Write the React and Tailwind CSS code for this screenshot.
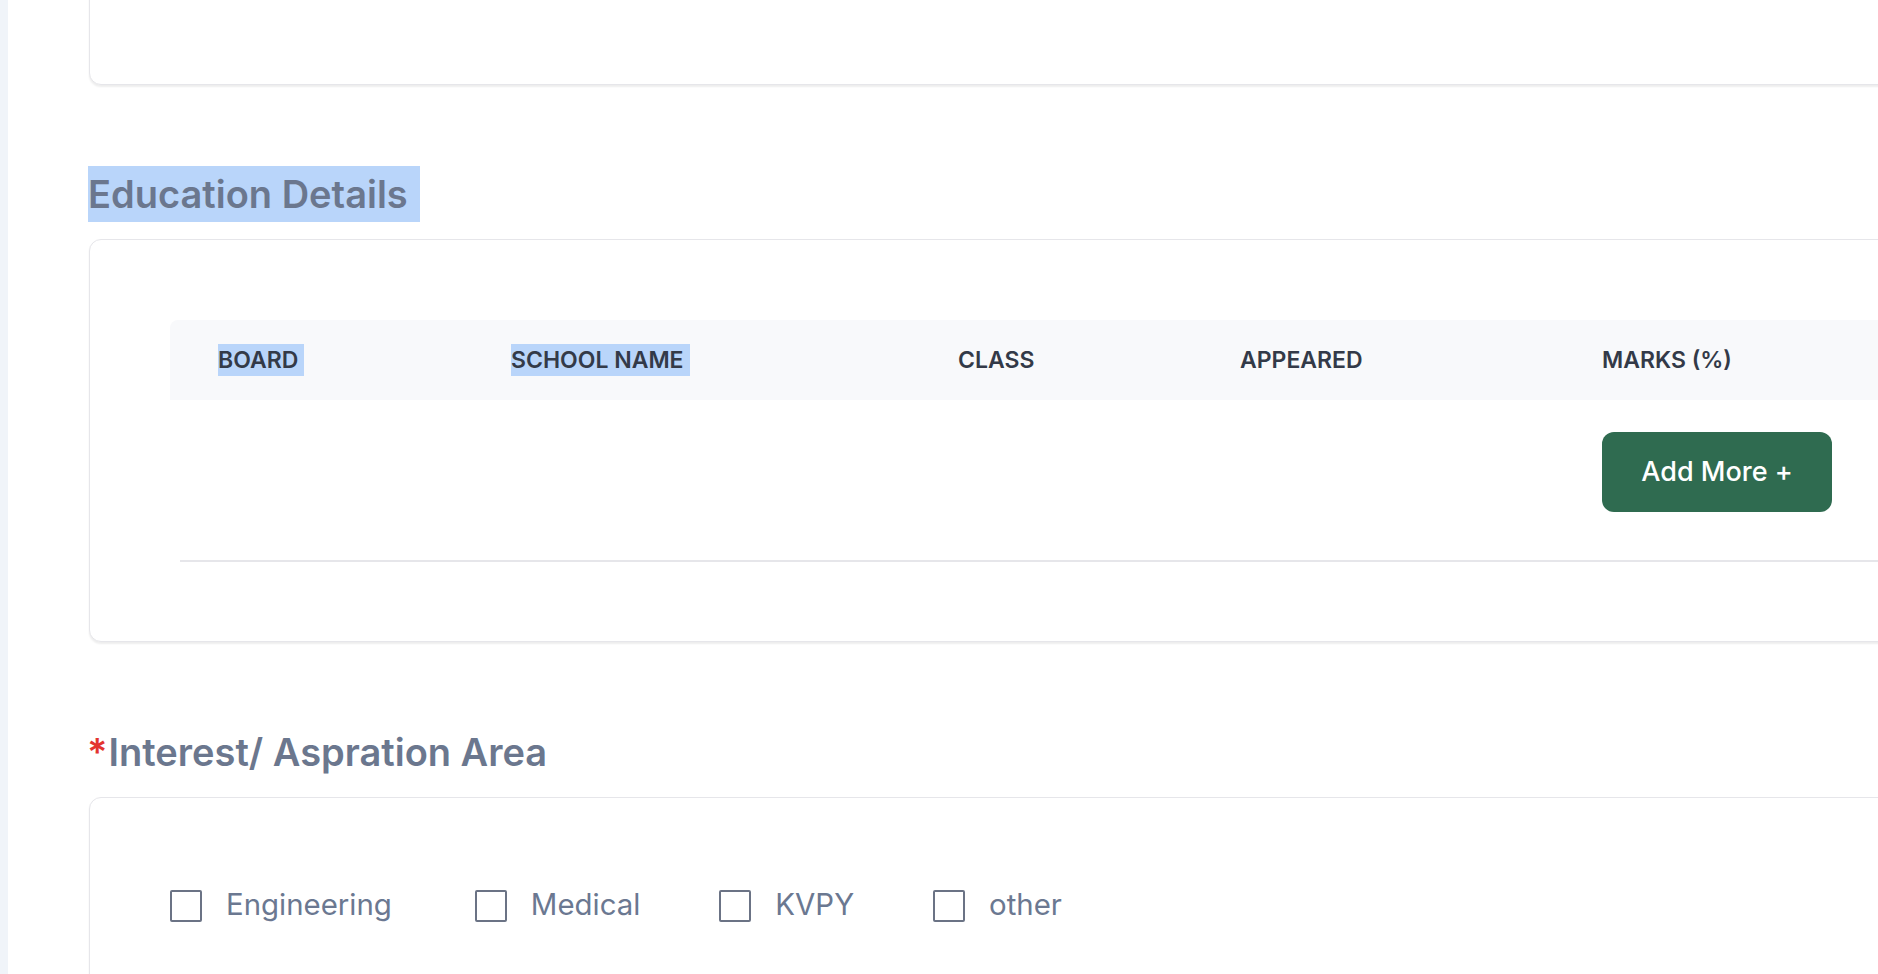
const COLUMNS = [
  { label: 'BOARD', w: 'w-[293px]', selected: true },
  { label: 'SCHOOL NAME', w: 'w-[447px]', selected: true },
  { label: 'CLASS', w: 'w-[282px]' },
  { label: 'APPEARED', w: 'w-[362px]' },
  { label: 'MARKS (%)', w: 'w-[300px]' },
];

const INTERESTS = ['Engineering', 'Medical', 'KVPY', 'other'];

function Card({ className = '', children }) {
  return (
    <div className={`rounded-xl border border-[#e6e6ea] bg-white shadow-[0_2px_2px_rgba(0,0,0,0.07)] ${className}`}>
      {children}
    </div>
  );
}

function SectionTitle({ required, selected, children }) {
  return (
    <h2 className="h-[56px] leading-[56px] text-[38px] font-semibold text-[#6b778e] whitespace-nowrap">
      {required && <span className="text-[#e3342f] mr-[1px]">*</span>}
      <span className={selected ? 'inline-block h-[56px] bg-[#b9d5fa] pr-[12px]' : ''}>{children}</span>
    </h2>
  );
}

export default function App() {
  return (
    <div className="flex min-h-screen h-[974px] bg-white font-[Inter,sans-serif] overflow-hidden">
      <div className="w-[8px] shrink-0 bg-[#f0f4f9]" />

      <main className="flex-1 overflow-hidden pl-[81px]">
        <div className="w-[1850px]">
          {/* previous section, cut off above */}
          <Card className="h-[200px] -mt-[115px]" />

          <div className="mt-[81px] mb-[17px] -ml-[1px]">
            <SectionTitle selected>Education Details</SectionTitle>
          </div>

          <Card className="pt-[80px] pb-[79px] pl-[80px]">
            <div className="flex h-[80px] items-center rounded-tl-lg bg-[#f8f9fb] pl-[48px]">
              {COLUMNS.map(c => (
                <div key={c.label} className={`${c.w} shrink-0 text-[23px] font-semibold text-[#333a48]`}>
                  <span className={c.selected ? 'inline-block leading-[32px] bg-[#b9d5fa] pr-[6px]' : 'leading-[32px]'}>
                    {c.label}
                  </span>
                </div>
              ))}
            </div>

            <div className="pt-[32px] pb-[48px] pl-[1432px]">
              <button className="flex h-[80px] w-[230px] items-center justify-center rounded-xl bg-[#2f6b50] text-[27px] font-medium text-white">
                Add More +
              </button>
            </div>
            <div className="ml-[10px] h-[2px] bg-[#e6e6ea]" />
          </Card>

          <div className="mt-[82px] mb-[17px] -ml-[2px]">
            <SectionTitle required>Interest/ Aspration Area</SectionTitle>
          </div>

          <Card className="h-[300px] pt-[92px] pl-[80px]">
            <div className="flex items-center">
              {INTERESTS.map(item => (
                <label key={item} className="mr-[79px] first:mr-[83px] flex items-center">
                  <span className="h-[32px] w-[32px] shrink-0 rounded-[2px] border-2 border-[#6b7385]" />
                  <span className="ml-[24px] -mt-[3px] text-[29.4px] leading-[32px] text-[#6b7891]">{item}</span>
                </label>
              ))}
            </div>
          </Card>
        </div>
      </main>
    </div>
  );
}
